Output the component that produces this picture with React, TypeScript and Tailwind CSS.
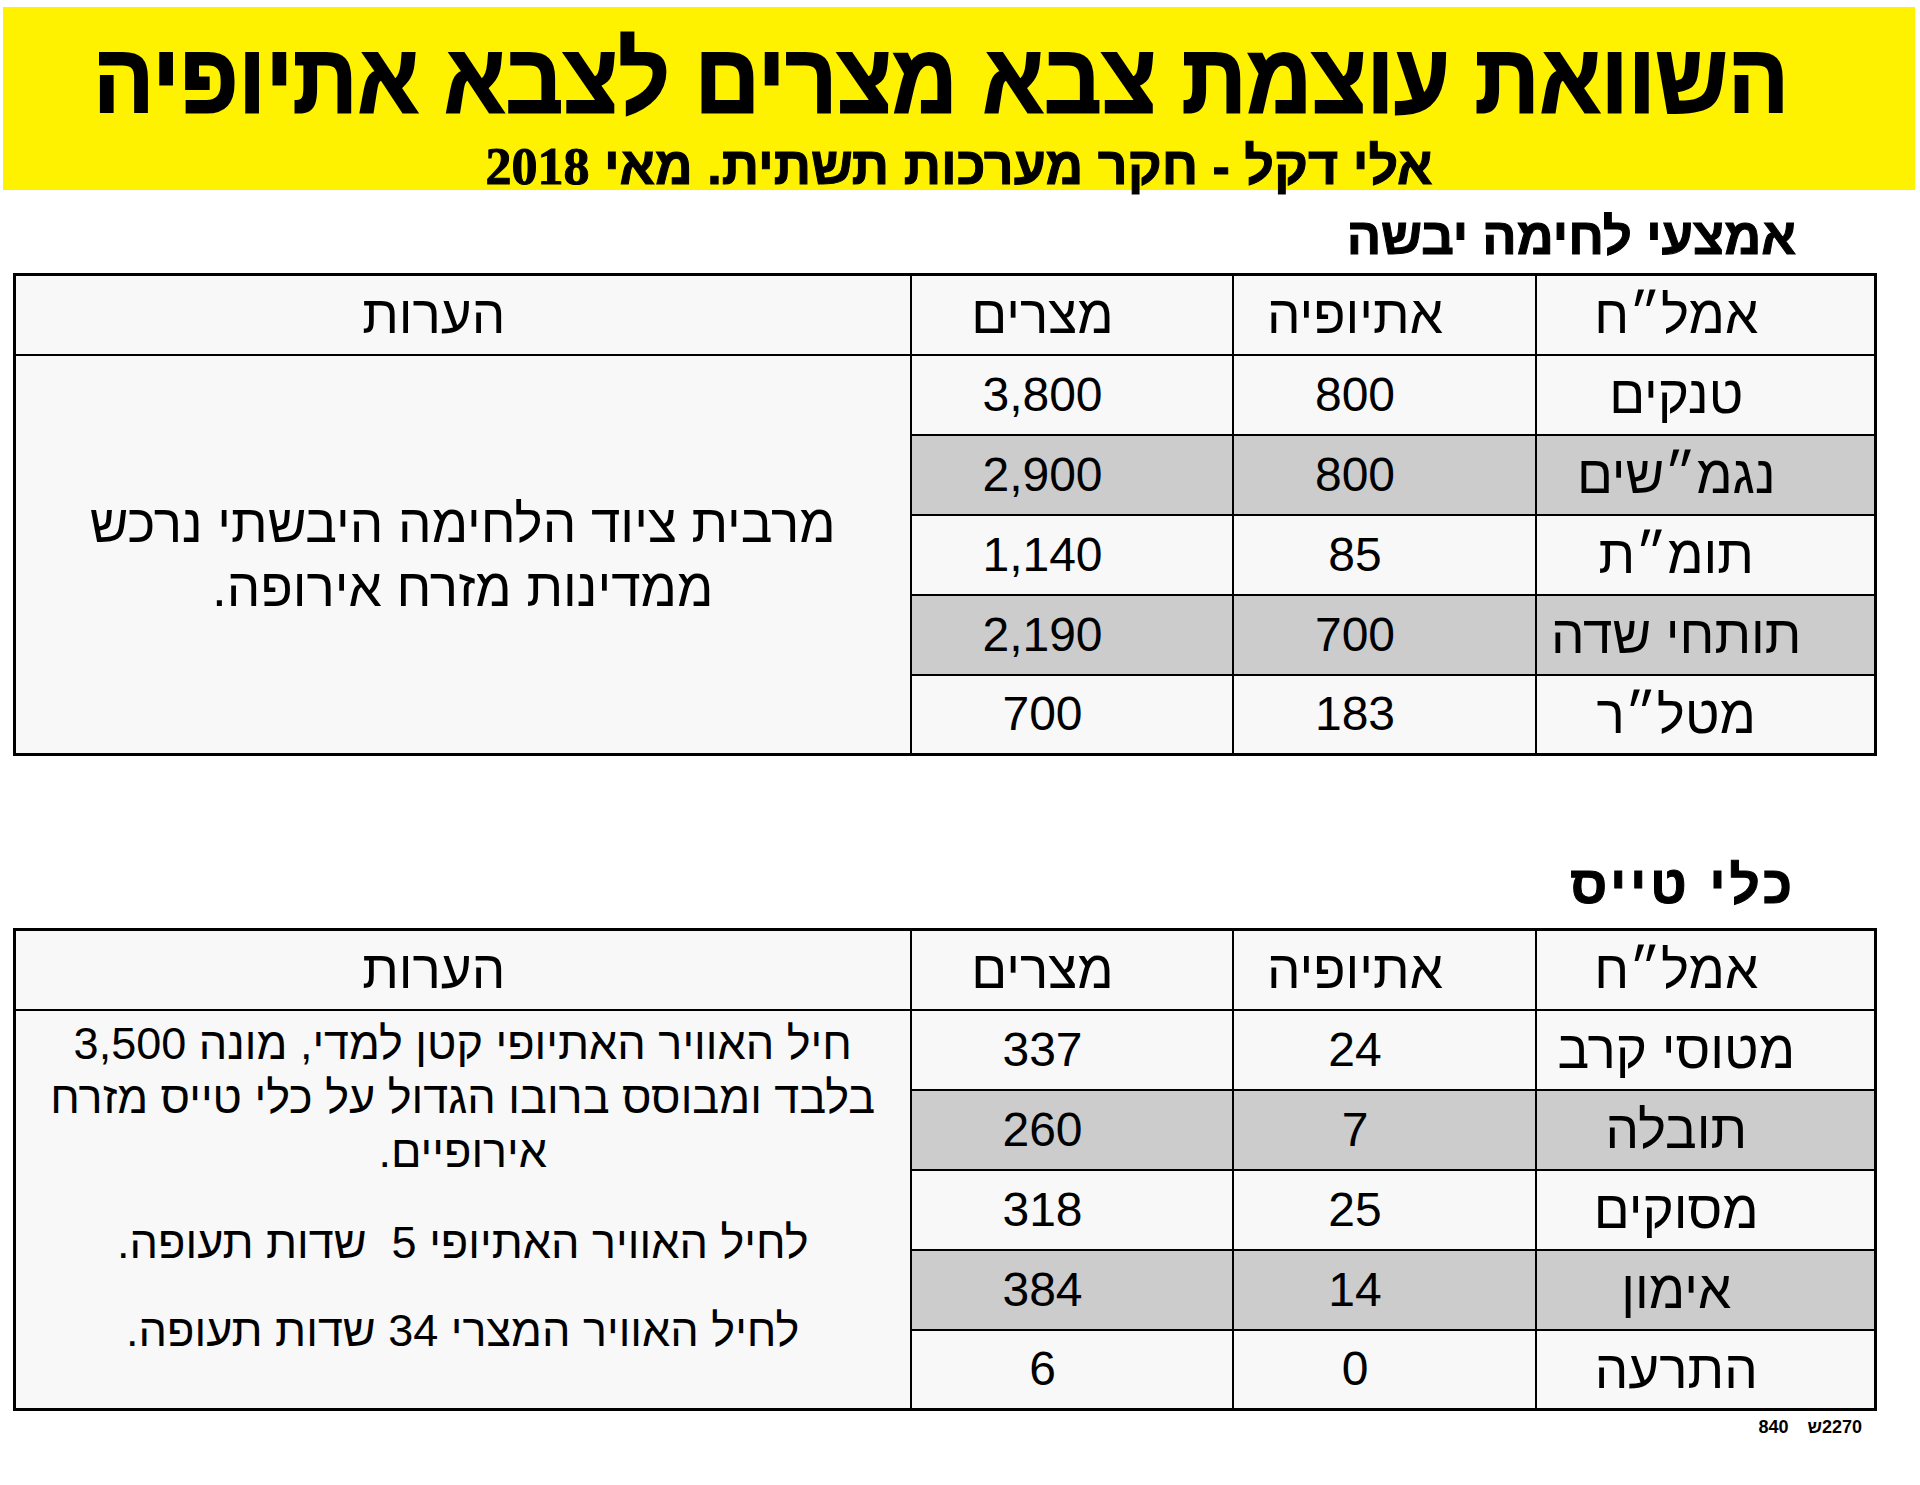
type Row = {
  name: string;
  ethiopia: string;
  egypt: string;
  shaded?: boolean;
};

const landRows: Row[] = [
  { name: "טנקים", ethiopia: "800", egypt: "3,800" },
  { name: "נגמ״שים", ethiopia: "800", egypt: "2,900", shaded: true },
  { name: "תומ״ת", ethiopia: "85", egypt: "1,140" },
  { name: "תותחי שדה", ethiopia: "700", egypt: "2,190", shaded: true },
  { name: "מטל״ר", ethiopia: "183", egypt: "700" },
];

const airRows: Row[] = [
  { name: "מטוסי קרב", ethiopia: "24", egypt: "337" },
  { name: "תובלה", ethiopia: "7", egypt: "260", shaded: true },
  { name: "מסוקים", ethiopia: "25", egypt: "318" },
  { name: "אימון", ethiopia: "14", egypt: "384", shaded: true },
  { name: "התרעה", ethiopia: "0", egypt: "6" },
];

const cell = "border-2 border-black h-[80px] p-0 pr-[58px] text-center align-middle";

const CompareTable = ({
  rows,
  notes,
  notesTop = false,
}: {
  rows: Row[];
  notes: React.ReactNode;
  notesTop?: boolean;
}) => {
  return (
    <table className="table-fixed border-collapse border-[3px] border-black w-[1861px] text-[48px] leading-none text-black">
      <colgroup>
        <col className="w-[340px]" />
        <col className="w-[303px]" />
        <col className="w-[322px]" />
        <col className="w-[896px]" />
      </colgroup>
      <thead>
        <tr className="bg-[#f8f8f8] text-[53px]">
          <th className={`${cell} font-normal`}>אמל״ח</th>
          <th className={`${cell} font-normal`}>אתיופיה</th>
          <th className={`${cell} font-normal`}>מצרים</th>
          <th className={`${cell} font-normal`}>הערות</th>
        </tr>
      </thead>
      <tbody>
        {rows.map((row, i) => {
          const bg = row.shaded ? "bg-[#cccccc]" : "bg-[#f8f8f8]";
          return (
            <tr key={row.name}>
              <td className={`${cell} ${bg} text-[53px]`}>{row.name}</td>
              <td className={`${cell} ${bg}`}>{row.ethiopia}</td>
              <td className={`${cell} ${bg}`}>{row.egypt}</td>
              {i === 0 && (
                <td
                  rowSpan={rows.length}
                  className={`border-2 border-black bg-[#f8f8f8] p-0 text-center ${notesTop ? "align-top" : "align-middle"}`}
                >
                  {notes}
                </td>
              )}
            </tr>
          );
        })}
      </tbody>
    </table>
  );
};

export default function App() {
  return (
    <div
      dir="rtl"
      className="w-[1920px] h-[1485px] bg-white flex flex-col overflow-hidden text-black"
      style={{ fontFamily: '"Liberation Sans", Arial, sans-serif' }}
    >
      {/* Banner */}
      <div className="mt-[7px] ml-[3px] mr-[5px] h-[183px] bg-[#fff200] flex flex-col items-center">
        <h1 className="mt-[22px] pr-[40px] text-[98px] leading-[98px] font-bold whitespace-nowrap scale-x-[0.92] [-webkit-text-stroke:2px_black]">
          השוואת עוצמת צבא מצרים לצבא אתיופיה
        </h1>
        <div className="mt-[14px] text-[52px] leading-[50px] font-bold whitespace-nowrap [-webkit-text-stroke:1px_black]">
          אלי דקל - חקר מערכות תשתית. מאי{" "}
          <span style={{ fontFamily: '"Liberation Serif", serif' }}>2018</span>
        </div>
      </div>

      {/* Land forces */}
      <h2 className="mt-[21px] mr-[124px] h-[52px] text-[51px] leading-[52px] font-bold whitespace-nowrap [-webkit-text-stroke:1px_black]">
        אמצעי לחימה יבשה
      </h2>
      <div className="mt-[10px] mr-[43px]">
        <CompareTable
          rows={landRows}
          notes={
            <div className="text-[53px] leading-[64px] pt-[4px]">
              <div>מרבית ציוד הלחימה היבשתי נרכש</div>
              <div>ממדינות מזרח אירופה.</div>
            </div>
          }
        />
      </div>

      {/* Aircraft */}
      <h2 className="mt-[102px] mr-[124px] h-[54px] text-[53px] leading-[54px] tracking-[4px] font-bold whitespace-nowrap [-webkit-text-stroke:1px_black]">
        כלי טייס
      </h2>
      <div className="mt-[16px] mr-[43px]">
        <CompareTable
          rows={airRows}
          notesTop
          notes={
            <div className="flex flex-col items-center pt-[6px] text-[45px] leading-[54px]">
              <div>חיל האוויר האתיופי קטן למדי, מונה 3,500</div>
              <div>בלבד ומבוסס ברובו הגדול על כלי טייס מזרח</div>
              <div>אירופיים.</div>
              <div className="mt-[37px]">לחיל האוויר האתיופי 5{"\u00a0\u00a0"}שדות תעופה.</div>
              <div className="mt-[34px]">לחיל האוויר המצרי 34 שדות תעופה.</div>
            </div>
          }
        />
      </div>

      {/* Footer code */}
      <div dir="ltr" className="mt-[7px] self-start mr-[58px] flex text-[18px] leading-[18px] font-bold">
        <span>840</span>
        <span className="ml-[19px]">ש</span>
        <span>2270</span>
      </div>
    </div>
  );
}
